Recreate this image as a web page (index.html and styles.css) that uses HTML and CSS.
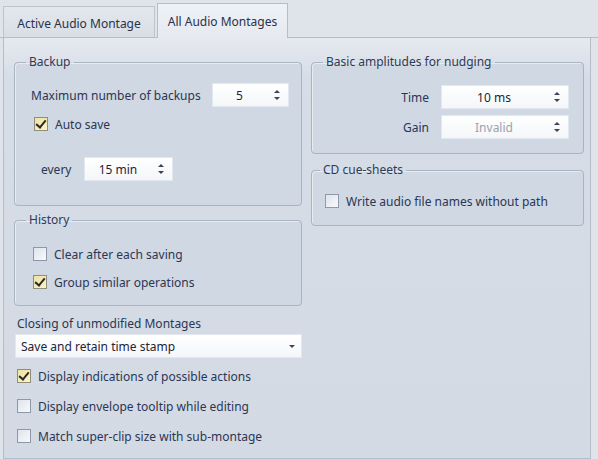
FILE: index.html
```html
<!DOCTYPE html>
<html lang="en">
<head>
    <meta charset="UTF-8">
    <title>Audio Montage Preferences</title>
    <link rel="stylesheet" href="styles.css">
</head>
<body>
    <div class="tabs">
        <div class="tab">Active Audio Montage</div>
        <div class="tab active">All Audio Montages</div>
    </div>

    <div class="panel">
        <div class="column">
            <fieldset class="group backup">
                <legend>Backup</legend>
                <div class="row">
                    <span class="label">Maximum number of backups</span>
                    <div class="spin spin-backups"><span class="value">5</span><span class="arrows"></span></div>
                </div>
                <label class="check checked auto-save"><span class="box"></span>Auto save</label>
                <div class="row every">
                    <span class="label">every</span>
                    <div class="spin spin-every"><span class="value">15 min</span><span class="arrows"></span></div>
                </div>
            </fieldset>

            <fieldset class="group history">
                <legend>History</legend>
                <label class="check"><span class="box"></span>Clear after each saving</label>
                <label class="check checked"><span class="box"></span>Group similar operations</label>
            </fieldset>

            <div class="closing-label">Closing of unmodified Montages</div>
            <div class="select"><span>Save and retain time stamp</span><span class="drop"></span></div>

            <div class="options">
                <label class="check checked"><span class="box"></span>Display indications of possible actions</label>
                <label class="check"><span class="box"></span>Display envelope tooltip while editing</label>
                <label class="check"><span class="box"></span>Match super-clip size with sub-montage</label>
            </div>
        </div>

        <div class="column">
            <fieldset class="group nudging">
                <legend>Basic amplitudes for nudging</legend>
                <div class="row">
                    <span class="label right">Time</span>
                    <div class="spin spin-wide"><span class="value">10 ms</span><span class="arrows"></span></div>
                </div>
                <div class="row">
                    <span class="label right">Gain</span>
                    <div class="spin spin-wide"><span class="value invalid">Invalid</span><span class="arrows"></span></div>
                </div>
            </fieldset>

            <fieldset class="group cue">
                <legend>CD cue-sheets</legend>
                <label class="check"><span class="box"></span>Write audio file names without path</label>
            </fieldset>
        </div>
    </div>
</body>
</html>
```

FILE: styles.css
```css
* {
    box-sizing: border-box;
    margin: 0;
    padding: 0;
}

body {
    width: 598px;
    height: 459px;
    overflow: hidden;
    font-family: "Noto Sans", "DejaVu Sans", sans-serif;
    font-size: 12px;
    color: #2b3654;
    background: #dfe3ea;
}

/* tab strip */
.tabs {
    display: flex;
    align-items: flex-end;
    height: 38px;
    padding-left: 3px;
    gap: 2px;
    border-bottom: 1px solid #b4bdca;
}

.tab {
    height: 31px;
    width: 152px;
    padding-top: 8px;
    text-align: center;
    background: linear-gradient(#e3e7ed, #d9dee6);
    border: 1px solid #bcc4d0;
    border-bottom: none;
    color: #28324a;
}

.tab.active {
    height: 35px;
    width: 131px;
    padding-top: 9px;
    margin-bottom: -1px;
    background: linear-gradient(#eef1f5, #e6e9ef);
    border-color: #b4bdca;
}

/* main page */
.panel {
    display: grid;
    grid-template-columns: 288px 273px;
    align-items: start;
    gap: 9px;
    height: 421px;
    margin: 0 7px 0 3px;
    padding: 16px 0 0 10px;
    background: linear-gradient(#e6e9ef, #d6dde7 40px, #d3dae4);
    border: 1px solid #b4bdca;
    border-top: none;
}

.column {
    display: flex;
    flex-direction: column;
}

.group {
    border: 1px solid #a9b3c2;
    border-radius: 4px;
    box-shadow: inset 1px 1px 0 rgba(255, 255, 255, 0.5);
    background: #d0d8e3;
    padding: 0 12px 0 16px;
}

.group legend {
    margin-left: -5px;
    padding: 0 3px;
    line-height: 16px;
    color: #2f3a55;
}

.row {
    display: flex;
    align-items: center;
    height: 24px;
}

.label {
    flex: 1;
}

.label.right {
    text-align: right;
    padding-right: 12px;
}

/* spinner boxes */
.spin {
    display: flex;
    align-items: center;
    height: 24px;
    background: linear-gradient(#ffffff, #f4f6f9);
    border: 1px solid #e3e7ee;
}

.spin .value {
    flex: 1;
    text-align: center;
    color: #1e2538;
}

.spin .value.invalid {
    color: #9aa2ae;
}

.arrows {
    position: relative;
    width: 22px;
    height: 100%;
}

.arrows::before,
.arrows::after {
    content: "";
    position: absolute;
    left: 8px;
    border-left: 3px solid transparent;
    border-right: 3px solid transparent;
}

.arrows::before {
    top: 6px;
    border-bottom: 3px solid #3a4356;
}

.arrows::after {
    bottom: 6px;
    border-top: 3px solid #3a4356;
}

.spin-backups {
    width: 77px;
}

.spin-every {
    width: 89px;
    margin-left: 13px;
}

.spin-wide {
    width: 128px;
}

.every .label {
    flex: none;
    margin-left: 10px;
}

/* checkboxes */
.check {
    display: flex;
    align-items: center;
    gap: 7px;
    height: 20px;
}

.box {
    width: 14px;
    height: 14px;
    border: 1px solid #8e98a8;
    background: linear-gradient(135deg, #dfe4eb, #f7f9fb);
    position: relative;
}

.check.checked .box {
    background: linear-gradient(135deg, #efe2a0, #fbf3cc);
    border-color: #8f8d7c;
}

.check.checked .box::after {
    content: "";
    position: absolute;
    left: 3px;
    top: 0;
    width: 4px;
    height: 8px;
    border-right: 2px solid #2b2b24;
    border-bottom: 2px solid #2b2b24;
    transform: rotate(40deg);
}

/* backup group */
.backup {
    padding-top: 13px;
    padding-bottom: 24px;
    height: 152px;
}

.auto-save {
    margin: 7px 0 23px 3px;
}

/* history group */
.history {
    margin-top: 6px;
    padding-top: 16px;
    padding-bottom: 14px;
    height: 94px;
}

.history .check + .check {
    margin-top: 8px;
}

.history .check {
    margin-left: 2px;
}

.closing-label {
    margin: 10px 0 0 3px;
    line-height: 16px;
}

.select {
    display: flex;
    align-items: center;
    justify-content: space-between;
    height: 24px;
    margin: 2px 0 0 1px;
    padding: 0 6px 0 5px;
    background: linear-gradient(#ffffff, #f4f6f9);
    border: 1px solid #e3e7ee;
    color: #1e2538;
}

.drop {
    border-left: 3px solid transparent;
    border-right: 3px solid transparent;
    border-top: 3px solid #3a4356;
}

.options {
    display: flex;
    flex-direction: column;
    gap: 10px;
    margin: 8px 0 0 3px;
}

/* right column */
.nudging {
    padding: 15px 14px 13px 16px;
    height: 100px;
}

.nudging .row + .row {
    margin-top: 6px;
}

.cue {
    margin-top: 8px;
    padding: 13px 12px 14px 13px;
    height: 64px;
}
```
